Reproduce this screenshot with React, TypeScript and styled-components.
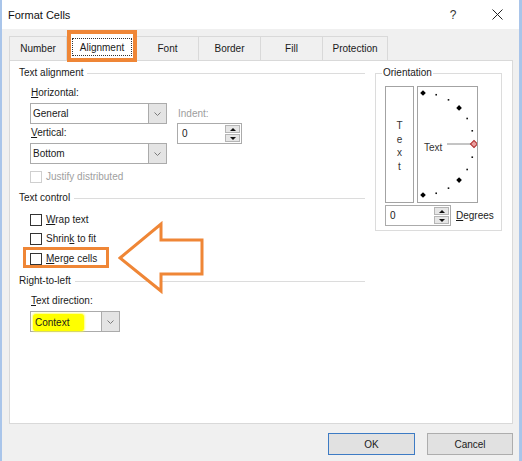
import React from 'react';
import styled, { createGlobalStyle } from 'styled-components';

const ORANGE = '#ef8636';

const GlobalStyle = createGlobalStyle`
  html, body {
    margin: 0;
    padding: 0;
    background: #f0f0f0;
  }
  body {
    font-family: "Liberation Sans", Arial, sans-serif;
    font-size: 10px;
    color: #1a1a1a;
  }
  u {
    text-decoration: underline;
    text-underline-offset: 1px;
  }
`;

const Window = styled.div`
  width: 522px;
  height: 461px;
  box-sizing: border-box;
  border-left: 2px solid #a9c5ea;
  border-right: 3px solid #a9c5ea;
  background: #f0f0f0;
  display: flex;
  flex-direction: column;
  overflow: hidden;
`;

const TitleBar = styled.div`
  height: 29px;
  flex: none;
  display: flex;
  align-items: center;
  background: #fff;
  padding-left: 6px;
`;

const Title = styled.span`
  flex: 1;
  font-size: 11px;
  color: #111;
`;

const Caption = styled.span`
  width: 44px;
  height: 29px;
  display: flex;
  align-items: center;
  justify-content: center;
  font-size: 12px;
  color: #333;
`;

const TabRow = styled.div`
  height: 31px;
  flex: none;
  display: flex;
  align-items: flex-end;
  padding-left: 7px;
`;

const Tab = styled.div<{ $w: number; $active?: boolean; $first?: boolean }>`
  position: relative;
  width: ${(p) => p.$w}px;
  height: ${(p) => (p.$active ? 28 : 24)}px;
  margin-bottom: ${(p) => (p.$active ? -1 : 0)}px;
  z-index: ${(p) => (p.$active ? 2 : 0)};
  box-sizing: border-box;
  display: flex;
  align-items: ${(p) => (p.$active ? 'flex-start' : 'center')};
  justify-content: center;
  padding-top: ${(p) => (p.$active ? 4 : 0)}px;
  background: ${(p) => (p.$active ? '#fff' : '#f0f0f0')};
  border-top: 1px solid #d9d9d9;
  border-right: 1px solid #d9d9d9;
  border-left: ${(p) => (p.$first || p.$active ? '1px solid #d9d9d9' : 'none')};
  color: #1a1a1a;
`;

const FocusLabel = styled.span`
  display: flex;
  align-items: center;
  justify-content: center;
  width: 60px;
  height: 18px;
  box-sizing: border-box;
  border: 1px dotted #333;
`;

const TabCallout = styled.span`
  position: absolute;
  top: -4px;
  left: -1px;
  right: -1px;
  bottom: -1px;
  border: 4px solid ${ORANGE};
  pointer-events: none;
`;

const Panel = styled.div`
  position: relative;
  height: 364px;
  flex: none;
  box-sizing: border-box;
  margin: 0 6px 0 7px;
  background: #fff;
  border: 1px solid #d9d9d9;
  padding: 6px 10px 0 9px;
  display: flex;
  gap: 10px;
`;

const LeftColumn = styled.div`
  width: 346px;
  display: flex;
  flex-direction: column;
`;

const Header = styled.div<{ $mt?: number }>`
  display: flex;
  align-items: center;
  gap: 4px;
  height: 12px;
  line-height: 12px;
  margin-top: ${(p) => p.$mt ?? 0}px;
  &::after {
    content: '';
    flex: 1;
    height: 1px;
    background: #dcdcdc;
  }
`;

const Label = styled.div<{ $mt?: number; $muted?: boolean }>`
  height: 12px;
  line-height: 12px;
  margin-top: ${(p) => p.$mt ?? 0}px;
  padding-left: 1px;
  color: ${(p) => (p.$muted ? '#9d9d9d' : 'inherit')};
`;

const Indent = styled.div`
  padding-left: 11px;
  display: flex;
  flex-direction: column;
`;

const AlignRow = styled.div`
  display: flex;
  gap: 10px;
  margin-top: 8px;
`;

const Stack = styled.div<{ $pt?: number }>`
  display: flex;
  flex-direction: column;
  padding-top: ${(p) => p.$pt ?? 0}px;
`;

const Select = styled.div<{ $w: number; $mt?: number }>`
  display: flex;
  width: ${(p) => p.$w}px;
  height: 21px;
  margin-top: ${(p) => p.$mt ?? 0}px;
  box-sizing: border-box;
  border: 1px solid #ababab;
  background: #fff;
`;

const SelectValue = styled.span`
  flex: 1;
  display: flex;
  align-items: center;
  padding-left: 2px;
`;

const Highlight = styled.span`
  display: flex;
  align-items: center;
  width: 49px;
  height: 17px;
  margin: 1px 0 0 0;
  padding-left: 2px;
  background: #ffff00;
  border-radius: 3px;
  box-shadow: 0 0 2px 1px rgba(255, 255, 60, 0.7);
`;

const SelectArrow = styled.span`
  width: 17px;
  flex: none;
  display: flex;
  align-items: center;
  justify-content: center;
  background: #e4e4e4;
  border-left: 1px solid #ababab;
`;

const Spin = styled.div<{ $w: number; $mt?: number }>`
  display: flex;
  width: ${(p) => p.$w}px;
  height: 21px;
  margin-top: ${(p) => p.$mt ?? 0}px;
  box-sizing: border-box;
  border: 1px solid #ababab;
  background: #fff;
`;

const SpinValue = styled.span`
  flex: 1;
  display: flex;
  align-items: center;
  padding-left: 4px;
`;

const SpinButtons = styled.span`
  width: 15px;
  display: flex;
  flex-direction: column;
  gap: 1px;
  padding: 1px;
`;

const SpinButton = styled.span<{ $down?: boolean }>`
  flex: 1;
  display: flex;
  align-items: center;
  justify-content: center;
  background: #e6e6e6;
  border: 1px solid #b5b5b5;
  &::before {
    content: '';
    border-left: 3px solid transparent;
    border-right: 3px solid transparent;
    ${(p) => (p.$down ? 'border-top: 3px solid #111;' : 'border-bottom: 3px solid #111;')}
  }
`;

const CheckRow = styled.div<{ $mt: number; $muted?: boolean }>`
  position: relative;
  display: flex;
  align-items: center;
  gap: 4px;
  width: fit-content;
  height: 12px;
  line-height: 12px;
  margin: ${(p) => p.$mt}px 0 0 11px;
  color: ${(p) => (p.$muted ? '#a0a0a0' : 'inherit')};
`;

const CheckBox = styled.span<{ $muted?: boolean }>`
  width: 12px;
  height: 12px;
  box-sizing: border-box;
  border: 1px solid ${(p) => (p.$muted ? '#cfcfcf' : '#333')};
  background: #fff;
`;

const RowCallout = styled.span`
  position: absolute;
  top: -6px;
  left: -7px;
  right: -12px;
  bottom: -3px;
  border: 3px solid ${ORANGE};
  pointer-events: none;
`;

const ArrowMark = styled.svg`
  position: absolute;
  left: 108px;
  top: 160px;
  width: 98px;
  height: 74px;
  pointer-events: none;
`;

const Group = styled.div`
  width: 127px;
  height: 158px;
  margin-top: 6px;
  box-sizing: border-box;
  border: 1px solid #dcdcdc;
  display: flex;
  flex-direction: column;
  padding-left: 9px;
`;

const Legend = styled.span`
  width: fit-content;
  margin: -7px 0 0 -3px;
  padding: 0 1px;
  height: 12px;
  line-height: 12px;
  background: #fff;
`;

const OrientRow = styled.div`
  display: flex;
  gap: 3px;
  margin-top: 7px;
`;

const VerticalBox = styled.div`
  width: 29px;
  height: 117px;
  box-sizing: border-box;
  border: 1px solid #a3a3a3;
  display: flex;
  flex-direction: column;
  align-items: center;
  justify-content: center;
  padding-top: 3px;
  line-height: 13.5px;
  color: #333;
`;

const Dial = styled.div`
  position: relative;
  width: 61px;
  height: 117px;
  box-sizing: border-box;
  border: 1px solid #a3a3a3;
  display: flex;
  align-items: center;
  padding: 5px 0 0 6px;
  color: #333;
`;

const DialDrawing = styled.svg`
  position: absolute;
  left: 0;
  top: 0;
  width: 59px;
  height: 115px;
`;

const DegreesRow = styled.div`
  display: flex;
  align-items: center;
  gap: 5px;
  margin-top: 2px;
`;

const Footer = styled.div`
  flex: 1;
  display: flex;
  justify-content: flex-end;
  align-items: flex-start;
  gap: 12px;
  padding: 9px 6px 0 0;
`;

const Button = styled.button<{ $primary?: boolean; $w: number }>`
  width: ${(p) => p.$w}px;
  height: 22px;
  box-sizing: border-box;
  border: 1px solid ${(p) => (p.$primary ? '#3d7bc4' : '#adadad')};
  background: #e1e1e1;
  font-family: inherit;
  font-size: 10px;
  color: #1a1a1a;
  padding: 0;
`;

const Chevron = () => (
  <svg width="7" height="4" viewBox="0 0 7 4">
    <path d="M0.5 0.5 L3.5 3.5 L6.5 0.5" fill="none" stroke="#7a7a7a" strokeWidth="1" />
  </svg>
);

const Spinner = ({ w, mt }: { w: number; mt?: number }) => (
  <Spin $w={w} $mt={mt}>
    <SpinValue>0</SpinValue>
    <SpinButtons>
      <SpinButton />
      <SpinButton $down />
    </SpinButtons>
  </Spin>
);

// dial points, 15 degree steps from top to bottom
const CX = 5;
const CY = 57;
const R = 51;
const dots = [90, 75, 60, 45, 30, 15, 0, -15, -30, -45, -60, -75, -90].map((a) => {
  const rad = (a * Math.PI) / 180;
  return {
    a,
    x: CX + R * Math.cos(rad),
    y: CY - R * Math.sin(rad),
    big: Math.abs(a) === 90 || Math.abs(a) === 45,
  };
});

const tabs = [
  { name: 'Number', w: 58 },
  { name: 'Alignment', w: 70, active: true },
  { name: 'Font', w: 62 },
  { name: 'Border', w: 62 },
  { name: 'Fill', w: 62 },
  { name: 'Protection', w: 65 },
];

const App = () => {
  return (
    <>
      <GlobalStyle />
      <Window>
        <TitleBar>
          <Title>Format Cells</Title>
          <Caption>?</Caption>
          <Caption>
            <svg width="11" height="11" viewBox="0 0 11 11">
              <path d="M0.5 0.5 L10.5 10.5 M10.5 0.5 L0.5 10.5" stroke="#222" strokeWidth="1" />
            </svg>
          </Caption>
        </TitleBar>

        <TabRow>
          {tabs.map((t, i) => (
            <Tab key={t.name} $w={t.w} $active={t.active} $first={i === 0}>
              {t.active ? (
                <>
                  <FocusLabel>{t.name}</FocusLabel>
                  <TabCallout />
                </>
              ) : (
                t.name
              )}
            </Tab>
          ))}
        </TabRow>

        <Panel>
          <LeftColumn>
            <Header>Text alignment</Header>
            <Indent>
              <AlignRow>
                <Stack>
                  <Label>
                    <u>H</u>orizontal:
                  </Label>
                  <Select $w={137} $mt={4}>
                    <SelectValue>General</SelectValue>
                    <SelectArrow>
                      <Chevron />
                    </SelectArrow>
                  </Select>
                  <Label $mt={3}>
                    <u>V</u>ertical:
                  </Label>
                  <Select $w={137} $mt={4}>
                    <SelectValue>Bottom</SelectValue>
                    <SelectArrow>
                      <Chevron />
                    </SelectArrow>
                  </Select>
                </Stack>
                <Stack $pt={21}>
                  <Label $muted>Indent:</Label>
                  <Spinner w={65} mt={3} />
                </Stack>
              </AlignRow>
            </Indent>
            <CheckRow $mt={7} $muted>
              <CheckBox $muted />
              Justify distributed
            </CheckRow>

            <Header $mt={9}>Text control</Header>
            <CheckRow $mt={10}>
              <CheckBox />
              <span>
                <u>W</u>rap text
              </span>
            </CheckRow>
            <CheckRow $mt={7}>
              <CheckBox />
              <span>
                Shrin<u>k</u> to fit
              </span>
            </CheckRow>
            <CheckRow $mt={8}>
              <CheckBox />
              <span>
                <u>M</u>erge cells
              </span>
              <RowCallout />
            </CheckRow>

            <Header $mt={10}>Right-to-left</Header>
            <Indent>
              <Label $mt={8}>
                <u>T</u>ext direction:
              </Label>
              <Select $w={90} $mt={4}>
                <SelectValue>
                  <Highlight>Context</Highlight>
                </SelectValue>
                <SelectArrow>
                  <Chevron />
                </SelectArrow>
              </Select>
            </Indent>
          </LeftColumn>

          <div>
            <Group>
              <Legend>Orientation</Legend>
              <OrientRow>
                <VerticalBox>
                  <span>T</span>
                  <span>e</span>
                  <span>x</span>
                  <span>t</span>
                </VerticalBox>
                <Dial>
                  <DialDrawing viewBox="0 0 59 115">
                    <line x1="29" y1={CY} x2={CX + R - 2} y2={CY} stroke="#8a8a8a" strokeWidth="1" />
                    {dots.map((d) =>
                      d.a === 0 ? (
                        <rect
                          key={d.a}
                          x={d.x - 2.5}
                          y={d.y - 2.5}
                          width="5"
                          height="5"
                          fill="#e9a0a0"
                          stroke="#b02a2a"
                          strokeWidth="1"
                          transform={`rotate(45 ${d.x} ${d.y})`}
                        />
                      ) : d.big ? (
                        <rect
                          key={d.a}
                          x={d.x - 2}
                          y={d.y - 2}
                          width="4"
                          height="4"
                          fill="#000"
                          transform={`rotate(45 ${d.x} ${d.y})`}
                        />
                      ) : (
                        <rect key={d.a} x={d.x - 0.8} y={d.y - 0.8} width="1.6" height="1.6" fill="#111" />
                      ),
                    )}
                  </DialDrawing>
                  <span style={{ position: 'relative' }}>Text</span>
                </Dial>
              </OrientRow>
              <DegreesRow>
                <Spinner w={66} />
                <span>
                  <u>D</u>egrees
                </span>
              </DegreesRow>
            </Group>
          </div>

          <ArrowMark viewBox="0 0 98 74">
            <polygon
              points="2,37 43,3 43,19 84,19 84,53 43,53 43,70"
              fill="#fff"
              stroke={ORANGE}
              strokeWidth="3"
              strokeLinejoin="miter"
            />
          </ArrowMark>
        </Panel>

        <Footer>
          <Button $primary $w={87}>
            OK
          </Button>
          <Button $w={86}>Cancel</Button>
        </Footer>
      </Window>
    </>
  );
};

export default App;
